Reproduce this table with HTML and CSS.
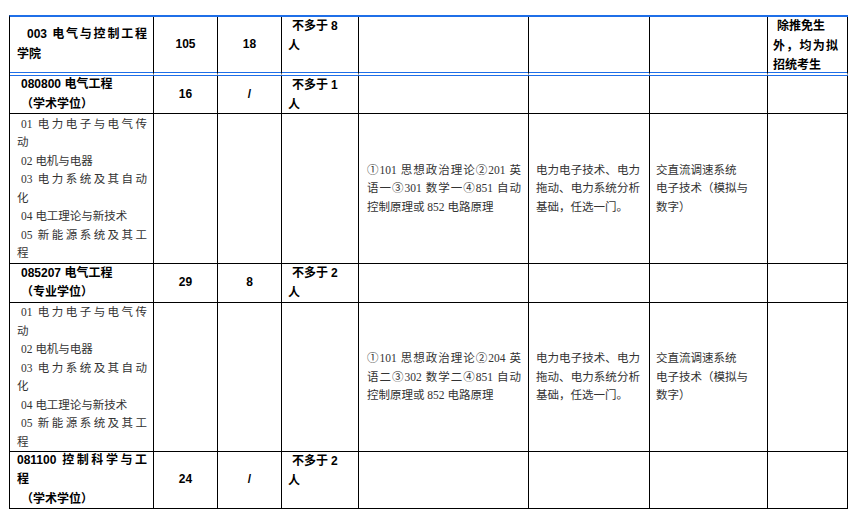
FILE: index.html
```html
<!DOCTYPE html>
<html lang="zh-CN">
<head>
<meta charset="utf-8">
<title>招生计划</title>
<link rel="stylesheet" href="styles.css">
</head>
<body>
<div class="plan">
  <!-- 学院 -->
  <div class="c col1 head b"><div class="jl ind10">003 电气与控制工程</div><div>学院</div></div>
  <div class="c num head b">105</div>
  <div class="c num head b">18</div>
  <div class="c col4 head b top"><div class="ind">不多于<span class="lat">8</span></div><div>人</div></div>
  <div class="c col5 head"></div>
  <div class="c col6 head"></div>
  <div class="c col7 head"></div>
  <div class="c col8 head b top"><div class="ind">除推免生</div><div class="jl">外，均为拟</div><div>招统考生</div></div>

  <!-- 080800 -->
  <div class="c col1 b"><div class="ind">080800 电气工程</div><div class="ind">（学术学位）</div></div>
  <div class="c num b">16</div>
  <div class="c num b">/</div>
  <div class="c col4 b top"><div class="ind">不多于<span class="lat">1</span></div><div>人</div></div>
  <div class="c col5"></div>
  <div class="c col6"></div>
  <div class="c col7"></div>
  <div class="c col8"></div>

  <div class="c col1 r">
    <div class="jl ind">01 电力电子与电气传</div><div>动</div>
    <div class="ind">02 电机与电器</div>
    <div class="jl ind">03 电力系统及其自动</div><div>化</div>
    <div class="ind">04 电工理论与新技术</div>
    <div class="jl ind">05 新能源系统及其工</div><div>程</div>
  </div>
  <div class="c"></div>
  <div class="c"></div>
  <div class="c"></div>
  <div class="c col5 r"><div class="jl">①101 思想政治理论②201 英</div><div class="jl">语一③301 数学一④851 自动</div><div>控制原理或 852 电路原理</div></div>
  <div class="c col6 r"><div class="jl">电力电子技术、电力</div><div class="jl">拖动、电力系统分析</div><div>基础，任选一门。</div></div>
  <div class="c col7 r"><div>交直流调速系统</div><div>电子技术（模拟与</div><div>数字）</div></div>
  <div class="c col8"></div>

  <!-- 085207 -->
  <div class="c col1 b"><div class="ind">085207 电气工程</div><div class="ind">（专业学位）</div></div>
  <div class="c num b">29</div>
  <div class="c num b">8</div>
  <div class="c col4 b top"><div class="ind">不多于<span class="lat">2</span></div><div>人</div></div>
  <div class="c col5"></div>
  <div class="c col6"></div>
  <div class="c col7"></div>
  <div class="c col8"></div>

  <div class="c col1 r">
    <div class="jl ind">01 电力电子与电气传</div><div>动</div>
    <div class="ind">02 电机与电器</div>
    <div class="jl ind">03 电力系统及其自动</div><div>化</div>
    <div class="ind">04 电工理论与新技术</div>
    <div class="jl ind">05 新能源系统及其工</div><div>程</div>
  </div>
  <div class="c"></div>
  <div class="c"></div>
  <div class="c"></div>
  <div class="c col5 r"><div class="jl">①101 思想政治理论②204 英</div><div class="jl">语二③302 数学二④851 自动</div><div>控制原理或 852 电路原理</div></div>
  <div class="c col6 r"><div class="jl">电力电子技术、电力</div><div class="jl">拖动、电力系统分析</div><div>基础，任选一门。</div></div>
  <div class="c col7 r"><div>交直流调速系统</div><div>电子技术（模拟与</div><div>数字）</div></div>
  <div class="c col8"></div>

  <!-- 081100 -->
  <div class="c col1 b"><div class="jl">081100 控制科学与工</div><div>程</div><div class="ind">（学术学位）</div></div>
  <div class="c num b">24</div>
  <div class="c num b">/</div>
  <div class="c col4 b top"><div class="ind">不多于<span class="lat">2</span></div><div>人</div></div>
  <div class="c col5"></div>
  <div class="c col6"></div>
  <div class="c col7"></div>
  <div class="c col8"></div>
</div>
</body>
</html>
```
FILE: styles.css
```css
html, body {
  margin: 0;
  padding: 0;
  background: #fff;
}

.plan {
  display: grid;
  grid-template-columns: 144px 64px 64px 77px 170px 121px 118px 80px;
  grid-template-rows: 59px 38px 150px 39px 149px 57px;
  width: max-content;
  margin: 15px 0 0 9px;
  border-left: 1px solid #000;
  border-top: 2px solid #1f6fe8;
}

.c {
  box-sizing: border-box;
  min-width: 0;
  display: flex;
  flex-direction: column;
  justify-content: center;
  border-right: 1px solid #000;
  border-bottom: 1px solid #000;
  padding: 0 6px;
}

.head {
  border-bottom: 4px double #1f6fe8;
}

.b {
  font-family: "Liberation Sans", "Noto Sans CJK SC", sans-serif;
  font-weight: 700;
  font-size: 12px;
  line-height: 19.5px;
  color: #000;
}

.r {
  font-family: "Liberation Serif", "Noto Sans CJK SC", serif;
  font-weight: 400;
  font-size: 11.5px;
  line-height: 18.5px;
  color: #333;
}

.num {
  align-items: center;
  padding: 0;
}

.top {
  justify-content: flex-start;
}

.col1 { padding: 0 6px 0 7px; }
.col4 { padding: 0 4px 0 6px; }
.col5 { padding: 0 7px 0 8px; }
.col6 { padding: 0 9px 0 7px; }
.col7 { padding: 0 6px 0 6px; }
.col8 { padding: 0 9px 0 5px; }

.jl {
  text-align: justify;
  text-align-last: justify;
}

.ind { text-indent: 4px; }
.ind10 { text-indent: 10px; }

.lat { margin-left: 3px; }
```
